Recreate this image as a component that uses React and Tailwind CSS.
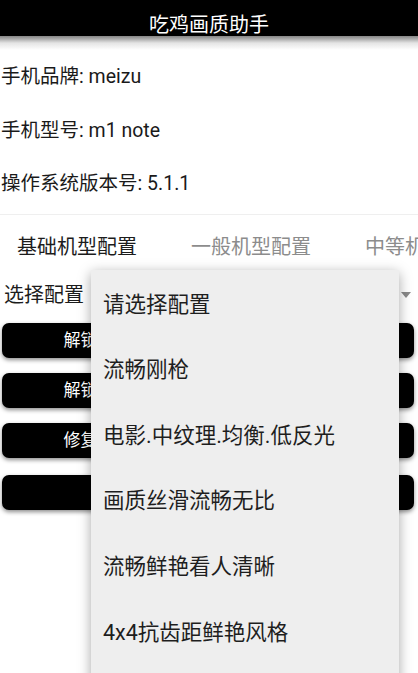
import React from 'react'

const font = "font-['Roboto','Noto_Sans_CJK_SC',sans-serif]"

const infoRows = [
  { label: '手机品牌', value: 'meizu', h: 'h-[54px]' },
  { label: '手机型号', value: 'm1 note', h: 'h-[54px]' },
  { label: '操作系统版本号', value: '5.1.1', h: 'h-[52px]' },
]

const tabs = ['基础机型配置', '一般机型配置', '中等机型配置', '高端机型配置']

const buttons = [
  '解锁极限帧率与超高清画质（需重启）',
  '解锁全部画质选项并应用所选配置文件',
  '修复游戏画质配置文件并恢复默认设置',
  '重启游戏使配置生效',
]

const options = [
  '请选择配置',
  '流畅刚枪',
  '电影.中纹理.均衡.低反光',
  '画质丝滑流畅无比',
  '流畅鲜艳看人清晰',
  '4x4抗齿距鲜艳风格',
  '极致流畅',
]

export default function App() {
  return (
    <div className={`relative w-[418px] h-[673px] overflow-hidden bg-white ${font}`}>
      {/* title bar */}
      <div className="h-[36px] bg-black flex items-end justify-center">
        <span className="text-white text-[20px] leading-[22px]">吃鸡画质助手</span>
      </div>
      <div className="h-[14px] bg-linear-to-b from-[#858585] via-[#e4e4e4] to-white" />

      {/* device info */}
      <div className="flex flex-col">
        {infoRows.map((r) => (
          <div key={r.label} className={`${r.h} flex items-center text-[19.5px] text-[#1a1a1a] pl-[1px]`}>
            {r.label}: {r.value}
          </div>
        ))}
      </div>
      <div className="mt-[4px] h-px bg-[#efefef]" />

      {/* tabs */}
      <div className="h-[63px] flex items-center gap-[54px] pl-[17px] whitespace-nowrap overflow-hidden">
        {tabs.map((t, i) => (
          <span key={t} className={`text-[20px] ${i === 0 ? 'text-[#1c1c1c]' : 'text-[#8c8c8c]'}`}>{t}</span>
        ))}
      </div>

      {/* selector */}
      <div className="h-[34px] flex items-center justify-between pl-[4px] pr-[7px]">
        <span className="text-[20px] text-[#1c1c1c]">选择配置</span>
        <span className="w-0 h-0 border-l-[5px] border-r-[5px] border-t-[6px] border-l-transparent border-r-transparent border-t-[#8a8a8a]" />
      </div>

      {/* action buttons */}
      <div className="mt-[11px] flex flex-col gap-[15px] ml-[2px] mr-[4px]">
        {buttons.map((b, i) => (
          <button
            key={i}
            className={`h-[35px] rounded-[7px] bg-black text-white text-[17px] shadow-[0_2px_4px_rgba(0,0,0,0.45)] ${i === 3 ? 'mt-[2px]' : ''}`}
          >
            {b}
          </button>
        ))}
      </div>

      {/* open dropdown */}
      <div className="absolute left-[91px] top-[270px] w-[308px] h-[440px] bg-[#eeeeee] shadow-[0_3px_12px_rgba(0,0,0,0.35)] pt-[2px]">
        {options.map((o) => (
          <div key={o} className="h-[65.6px] flex items-center pl-[12px] text-[21.5px] text-[#1e1e1e]">
            {o}
          </div>
        ))}
      </div>
    </div>
  )
}
